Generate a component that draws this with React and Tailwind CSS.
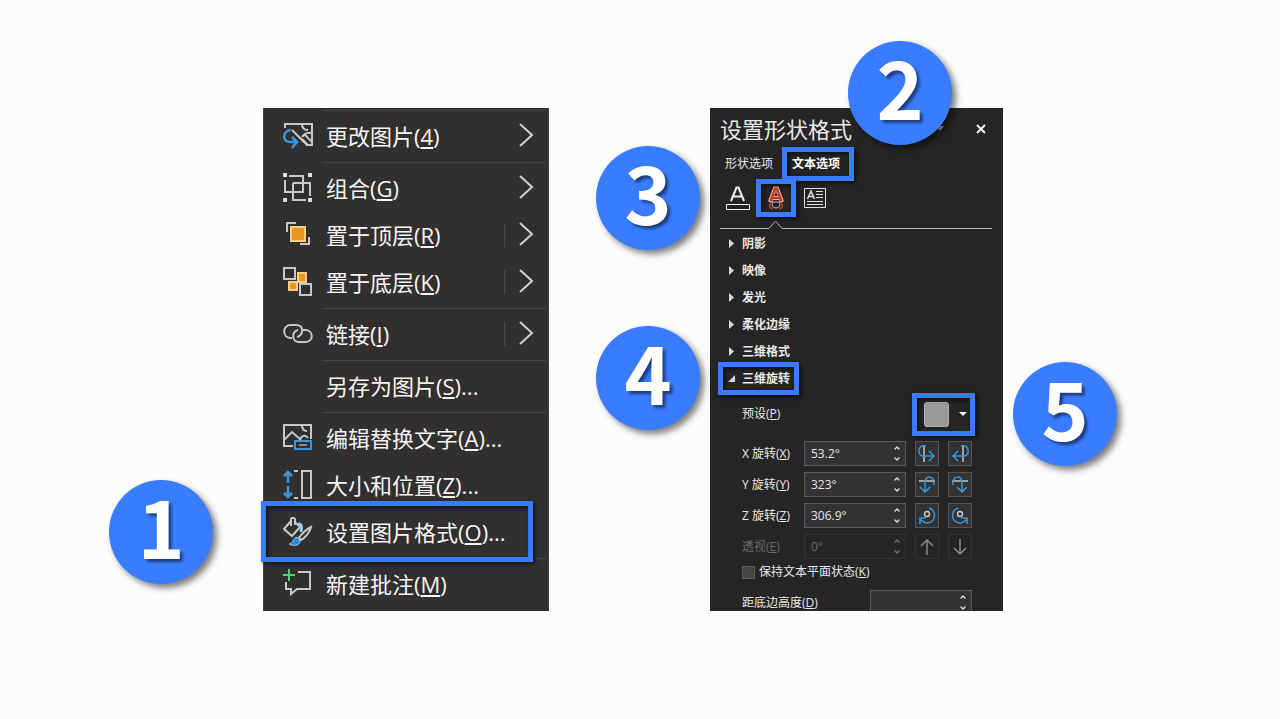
import { ChevronDown, ChevronUp } from "lucide-react";

function Badge({ children, className }) {
  return (
    <div
      className={`absolute z-20 flex h-[104px] w-[104px] items-center justify-center rounded-full bg-[#3a7cff] pb-4 font-['Noto_Sans_CJK_SC',sans-serif] text-[80px] leading-none font-bold text-white shadow-[4px_4px_6px_rgba(0,0,0,0.5)] [text-shadow:3px_3px_3px_rgba(0,0,0,0.5)] ${className}`}
    >
      {children}
    </div>
  );
}

function Highlight({ className }) {
  return (
    <span
      className={`pointer-events-none absolute z-10 border-[5px] border-[#3a7cff] shadow-[2px_2px_4px_rgba(0,0,0,0.6),inset_2px_2px_4px_rgba(0,0,0,0.6)] ${className}`}
    />
  );
}

// 30x30 menu icons
const menuIcons = {
  change: (
    <>
      <path d="M2 7V3H29V24H23M19 3C19 7 21 9 25 9M29 12C25 11 21 13 19 16M9 9L24 24M19 18L25 24M22 14L29 21" />
      <path d="M8 9C-1 10 -1 21 7 21H14M9 16L14 21L9 27" stroke="#3a96dd" strokeWidth="2.5" />
    </>
  ),
  group: (
    <>
      <path d="M6 3H20V19H2V7M10 10H27V23M10 10V27H23" />
      <g fill="#dcdcdc" stroke="none">
        <rect x="0" y="0" width="4" height="4" />
        <rect x="25" y="0" width="4" height="4" />
        <rect x="0" y="25" width="4" height="4" />
        <rect x="25" y="25" width="4" height="4" />
      </g>
    </>
  ),
  front: (
    <>
      <path d="M4 12V3H13M26 17V24H17" />
      <rect x="8" y="7" width="14" height="14" fill="#ec9522" stroke="#f8cf82" />
    </>
  ),
  back: (
    <>
      <path d="M15 6H23V15H15ZM6 15H14V23H6Z" fill="#ec9522" stroke="#f8cf82" />
      <path d="M1 1H12V12H1ZM17 17H28V28H17Z" fill="#32302f" />
    </>
  ),
  link: (
    <path d="M9 19H8C-1 19 -1 6 8 6H13C21 6 21 16 14 18M20 11H22C31 11 31 23 22 23H16C9 23 8 13 15 11" />
  ),
  alt: (
    <>
      <path d="M10 23H1V2H28V16M1 17L9 9L18 17M19 2C19 6 21 8 24 8M17 16C19 12 23 12 25 15" />
      <path d="M12 18H28V26H12Z" stroke="#3a96dd" />
      <path d="M16 22H24" stroke="#8c8c8c" />
    </>
  ),
  size: (
    <>
      <path d="M11 1H15M11 28H15M19 1H28V28H19Z" />
      <path d="M5 13V2M1 6L5 2L9 6M5 16V27M1 23L5 27L9 23" stroke="#3a96dd" strokeWidth="2.5" />
    </>
  ),
  format: (
    <>
      <path d="M8 9V3C8 0 12 0 12 3V8M8 4L1 12L9 19L17 10L11 4" />
      <path d="M15 7C19 7 19 10 18 15" stroke="#9ccbee" strokeWidth="3" />
      <path d="M28 10C24 12 18 17 16 21L18 23C22 21 27 15 28 10Z" />
      <path d="M14 20C9 21 11 26 6 27C12 30 18 28 17 23Z" fill="#2f8ddb" stroke="#8cc5f0" strokeWidth="1" />
    </>
  ),
  comment: (
    <>
      <path d="M15 3H27V20H14L8 25V20H3V13" />
      <path d="M6 0V12M0 6H12" stroke="#5cd07c" />
    </>
  ),
};

const menuGroups = [
  [{ icon: "change", text: "更改图片", hotkey: "4", arrow: true }],
  [
    { icon: "group", text: "组合", hotkey: "G", arrow: true },
    { icon: "front", text: "置于顶层", hotkey: "R", arrow: true, split: true },
    { icon: "back", text: "置于底层", hotkey: "K", arrow: true, split: true },
  ],
  [{ icon: "link", text: "链接", hotkey: "I", arrow: true, split: true }],
  [{ text: "另存为图片", hotkey: "S", dots: true }],
  [
    { icon: "alt", text: "编辑替换文字", hotkey: "A", dots: true },
    { icon: "size", text: "大小和位置", hotkey: "Z", dots: true },
    { icon: "format", text: "设置图片格式", hotkey: "O", dots: true, marked: true },
  ],
  [{ icon: "comment", text: "新建批注", hotkey: "M" }],
];

function MenuItem({ item }) {
  return (
    <button type="button" className="relative flex h-[47px] w-full items-center pb-0.5 pl-[19px] text-left">
      <svg
        width="30"
        height="30"
        viewBox="0 0 30 30"
        fill="none"
        stroke="#c8c8c8"
        strokeWidth="2"
        aria-hidden="true"
      >
        {menuIcons[item.icon]}
      </svg>
      <span className="ml-[13px] flex-1 whitespace-nowrap">
        {item.text}(<u>{item.hotkey}</u>){item.dots && "..."}
      </span>
      {item.split && <span className="mr-3.5 h-6 w-px bg-[#4a4847]" />}
      {item.arrow && (
        <svg
          width="16"
          height="26"
          viewBox="0 0 16 26"
          fill="none"
          stroke="#d0d0d0"
          strokeWidth="2"
          className="mr-[13px]"
          aria-hidden="true"
        >
          <path d="M1 1L13 12L1 23" />
        </svg>
      )}
      {item.marked && <Highlight className="-top-2 -bottom-1.5 -left-[3px] w-[272px]" />}
    </button>
  );
}

function ContextMenu() {
  return (
    <div className="relative w-[286px] shrink-0">
      <div className="border-x border-[#444241] bg-[#32302f] pb-[3px] font-['Open_Sans','Noto_Sans_CJK_SC',sans-serif] text-[22px] leading-none text-[#f4f4f4]">
        {menuGroups.map((group, i) => (
          <div key={i}>
            <hr className="mr-0.5 ml-[58px] h-[5px] border-y-2 border-t-[#32302f] border-b-[#32302f] bg-[#474544]" />
            {group.map((item) => (
              <MenuItem key={item.hotkey} item={item} />
            ))}
          </div>
        ))}
      </div>
      <Badge className="top-[372px] left-[-154px]">1</Badge>
    </div>
  );
}

const sections = ["阴影", "映像", "发光", "柔化边缘", "三维格式"];

const rotations = [
  {
    id: "x",
    label: "X 旋转",
    hotkey: "X",
    value: "53.2°",
    icons: [
      <>
        <path d="M9 3V20" stroke="#c8c8c8" />
        <path d="M11 4C2 2 2 14 8 14H19M14 9L19 14L14 19" />
      </>,
      <>
        <path d="M15 3V20" stroke="#c8c8c8" />
        <path d="M13 4C22 2 22 14 16 14H5M10 9L5 14L10 19" />
      </>,
    ],
  },
  {
    id: "y",
    label: "Y 旋转",
    hotkey: "Y",
    value: "323°",
    icons: [
      <>
        <path d="M4 8H20" stroke="#c8c8c8" />
        <path d="M19 12C20 2 10 2 10 9V19M5 14L10 19L15 14" />
      </>,
      <>
        <path d="M4 8H20" stroke="#c8c8c8" />
        <path d="M5 12C4 2 14 2 14 9V19M9 14L14 19L19 14" />
      </>,
    ],
  },
  {
    id: "z",
    label: "Z 旋转",
    hotkey: "Z",
    value: "306.9°",
    icons: [
      <>
        <circle cx="12" cy="10" r="2.5" stroke="#c8c8c8" />
        <path d="M14 4C22 7 21 19 12 19C9 19 7 17 5 15M5 20V14H11" />
      </>,
      <>
        <circle cx="12" cy="10" r="2.5" stroke="#c8c8c8" />
        <path d="M10 4C2 7 3 19 12 19C15 19 17 17 19 15M19 20V14H13" />
      </>,
    ],
  },
  {
    id: "e",
    label: "透视",
    hotkey: "E",
    value: "0°",
    disabled: true,
    icons: [
      <path d="M12 20V5M6 11L12 5L18 11" stroke="#8a8a8a" />,
      <path d="M12 4V19M6 13L12 19L18 13" stroke="#8a8a8a" />,
    ],
  },
];

function Spinner({ id, value, disabled }) {
  return (
    <div
      className={`flex h-[25px] w-[102px] border pl-1.5 ${
        disabled ? "border-[#333333] text-[#6a6a6a]" : "border-[#5c5c5c] bg-[#333333] text-[#e4e4e4]"
      }`}
    >
      <input id={id} type="text" defaultValue={value} disabled={disabled} className="w-0 flex-1 outline-none" />
      <span className="flex w-4 flex-col items-center justify-between py-0.5">
        <ChevronUp size={8} strokeWidth={4} />
        <ChevronDown size={8} strokeWidth={4} />
      </span>
    </div>
  );
}

function RotationRow({ row }) {
  return (
    <div className={`flex items-center ${row.disabled ? "text-[#6a6a6a]" : ""}`}>
      <label htmlFor={row.id} className="flex-1 whitespace-nowrap">
        {row.label}(<u>{row.hotkey}</u>)
      </label>
      <Spinner id={row.id} value={row.value} disabled={row.disabled} />
      {row.icons.map((icon, i) => (
        <button
          key={i}
          type="button"
          aria-label={row.label}
          disabled={row.disabled}
          className={`ml-[9px] flex h-[25px] w-6 items-center justify-center border ${
            row.disabled ? "border-[#333333]" : "border-[#555555] bg-[#333333]"
          }`}
        >
          <svg
            width="24"
            height="24"
            viewBox="0 0 24 24"
            fill="none"
            stroke="#3a96dd"
            strokeWidth="1.5"
            className="shrink-0"
            aria-hidden="true"
          >
            {icon}
          </svg>
        </button>
      ))}
    </div>
  );
}

function FormatPane() {
  return (
    <div className="relative w-[293px] shrink-0">
      <div className="bg-[#252525] pt-2 pr-[11px] pl-2.5 font-['Open_Sans','Noto_Sans_CJK_SC',sans-serif] text-[12px] leading-none text-[#e8e8e8]">
        <div className="flex h-[31px] items-center pb-1.5">
          <h2 className="flex-1 text-[22px] leading-none whitespace-nowrap">设置形状格式</h2>
          <svg width="8" height="5" viewBox="0 0 8 5" className="mr-8" aria-hidden="true">
            <path d="M0 0H8L4 5Z" fill="#b0b0b0" />
          </svg>
          <button type="button" aria-label="关闭" className="mr-1.5">
            <svg width="10" height="10" viewBox="0 0 10 10" stroke="#f0f0f0" strokeWidth="2" aria-hidden="true">
              <path d="M1 1L9 9M9 1L1 9" />
            </svg>
          </button>
        </div>

        <div className="flex h-[33px] items-center gap-[19px] pl-[5px]">
          <button type="button">形状选项</button>
          <button type="button" className="relative font-bold text-white">
            文本选项
            <Highlight className="-inset-y-[11px] -right-[14px] -left-2.5" />
          </button>
        </div>

        <div className="flex h-9 items-center pl-[5px]">
          <button type="button" aria-label="文本填充与轮廓">
            <svg width="26" height="26" viewBox="0 0 26 26" fill="none" stroke="#f0f0f0" aria-hidden="true">
              <path d="M6 16L11.5 2.5H13.5L19 16M8.500 11.5H16.5" strokeWidth="2" />
              <path d="M1.5 19.5H24.5V24.5H1.5Z" />
            </svg>
          </button>
          <button type="button" aria-label="文字效果" className="relative ml-3">
            <svg width="26" height="26" viewBox="0 0 26 26" fill="none" aria-hidden="true">
              <path d="M7 17L12 3.5H14L19 17M9.5 13H16.5" stroke="#f2c9bd" strokeWidth="4" />
              <path d="M7.5 16L12 4H14L18.5 16M9.5 13H16.5" stroke="#c8371b" strokeWidth="2.5" />
              <path d="M8 18C5 20 7 23 10 24M18 18C21 20 19 23 16 24" stroke="#a83a26" strokeWidth="2" />
              <path d="M10 17C8 20 10 23 13 23C16 23 18 20 16 17Z" fill="#252525" stroke="#c8c8c8" />
            </svg>
            <Highlight className="-inset-x-[7px] -inset-y-1.5" />
          </button>
          <button type="button" aria-label="文本框" className="ml-[15px]">
            <svg width="22" height="20" viewBox="0 0 22 20" fill="none" stroke="#e0e0e0" aria-hidden="true">
              <path d="M0.5 0.5H21.5V19.5H0.5ZM12 3.5H19M12 6.5H19M12 9.5H19M3 13.5H19M3 16.5H19" />
              <path d="M3.5 11L7 3L10.5 11M5 8.5H9.5" strokeWidth="1.5" />
            </svg>
          </button>
        </div>

        <svg className="h-3.5 w-full" fill="none" stroke="#b4b4b4" aria-hidden="true">
          <path d="M0 12.5H49L55.5 5L62 12.5" />
          <line x1="62" y1="12.5" x2="100%" y2="12.5" />
        </svg>

        {sections.map((name) => (
          <button key={name} type="button" className="flex h-[27px] w-full items-center pl-[9px] font-bold">
            <svg width="5" height="9" viewBox="0 0 5 9" aria-hidden="true">
              <path d="M0 0L5 4.5L0 9Z" fill="#d8d8d8" />
            </svg>
            <span className="ml-2">{name}</span>
          </button>
        ))}
        <button type="button" className="relative flex h-[27px] items-center pr-2 pl-2 font-bold">
          <svg width="7" height="7" viewBox="0 0 7 7" aria-hidden="true">
            <path d="M7 0V7H0Z" fill="#d8d8d8" />
          </svg>
          <span className="ml-[7px]">三维旋转</span>
          <Highlight className="-inset-y-[3px] -right-px -left-0.5" />
        </button>

        <div className="pr-5 pl-[22px]">
          <div className="flex h-11 items-center justify-between">
            <span>
              预设(<u>P</u>)
            </span>
            <button type="button" aria-label="预设" className="relative flex items-center gap-2.5 pr-[5px]">
              <span className="h-[25px] w-[25px] rounded-[3px] border border-[#b0b0b0] bg-[#999999]" />
              <svg width="8" height="4" viewBox="0 0 8 4" aria-hidden="true">
                <path d="M0 0H8L4 4Z" fill="#f4f4f4" />
              </svg>
              <Highlight className="-inset-y-[9px] -right-[3px] -left-3" />
            </button>
          </div>

          <div className="mt-[5px] flex flex-col gap-1.5">
            {rotations.map((row) => (
              <RotationRow key={row.id} row={row} />
            ))}
          </div>

          <label className="flex h-[26px] items-center whitespace-nowrap">
            <input type="checkbox" className="mr-1 h-[13px] w-[13px] appearance-none border border-[#5c5c5c] bg-[#444444]" />
            保持文本平面状态(<u>K</u>)
          </label>

          <div className="mt-[5px] h-[21px] overflow-hidden">
            <div className="flex items-center justify-between">
              <label htmlFor="distance">
                距底边高度(<u>D</u>)
              </label>
              <Spinner id="distance" value="" />
            </div>
          </div>
        </div>
      </div>
      <Badge className="top-[-67px] left-[138px]">2</Badge>
      <Badge className="top-[38px] left-[-114px]">3</Badge>
      <Badge className="top-[218px] left-[-114px]">4</Badge>
      <Badge className="top-[254px] left-[303px]">5</Badge>
    </div>
  );
}

export default function App() {
  return (
    <main className="flex min-h-screen items-center justify-center gap-[161px] bg-[#fcfcfc] pr-3.5">
      <ContextMenu />
      <FormatPane />
    </main>
  );
}
